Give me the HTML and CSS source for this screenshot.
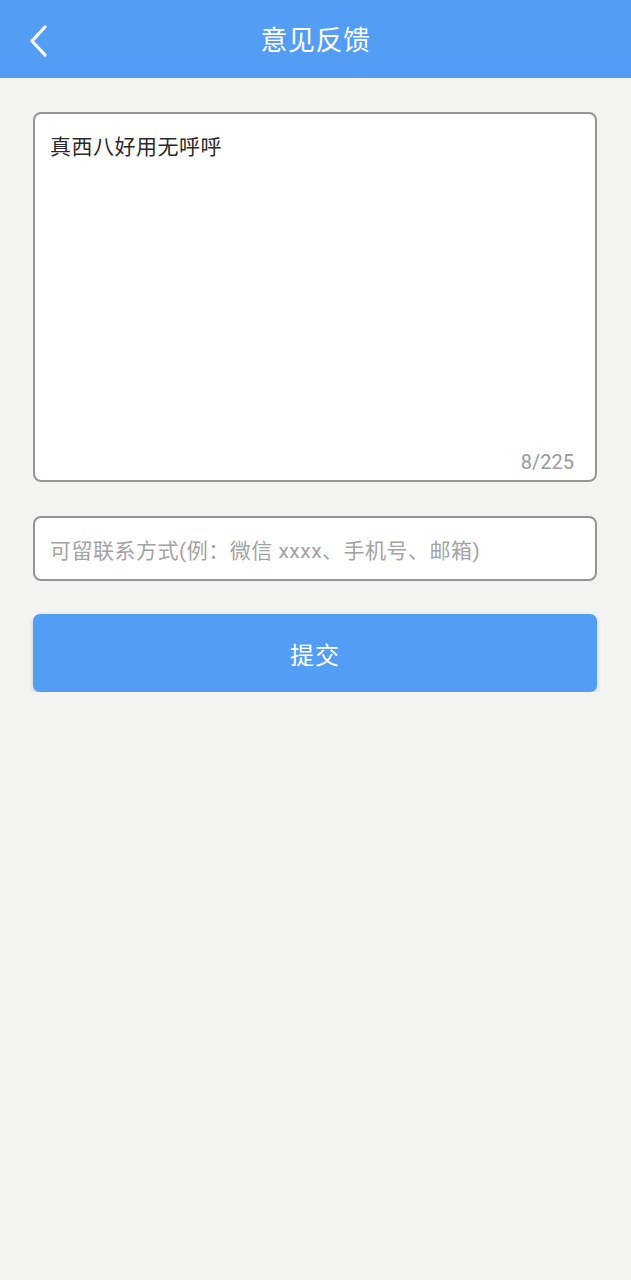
FILE: index.html
```
<!DOCTYPE html>
<html lang="zh">
<head>
<meta charset="utf-8">
<title>意见反馈</title>
<link rel="stylesheet" href="styles.css">
</head>
<body>
<header class="topbar">
  <button class="back" aria-label="返回">
    <svg width="24" height="34" viewBox="0 0 24 34"><path d="M18 3 L5 17 L18 31" fill="none" stroke="#fff" stroke-width="3.2" stroke-linecap="round" stroke-linejoin="round"/></svg>
  </button>
  <h1 class="title">意见反馈</h1>
</header>
<main class="content">
  <div class="feedback-box">
    <div class="feedback-text">真西八好用无呼呼</div>
    <div class="counter">8/225</div>
  </div>
  <div class="contact-box">
    <span class="placeholder">可留联系方式(例：微信 xxxx、手机号、邮箱)</span>
  </div>
  <button class="submit">提交</button>
</main>
</body>
</html>
```
FILE: styles.css
```
* { box-sizing: border-box; }
html, body {
  margin: 0;
  padding: 0;
  background: #f3f4f2;
  font-family: Roboto, "Noto Sans CJK SC", sans-serif;
}
.topbar {
  height: 78px;
  background: #539df5;
  display: flex;
  align-items: center;
  justify-content: center;
  position: relative;
}
.back {
  position: absolute;
  left: 27px;
  top: 24px;
  padding: 0;
  border: 0;
  background: none;
  display: flex;
}
.title {
  margin: 0;
  color: #fff;
  font-size: 27px;
  font-weight: 400;
  line-height: 1;
  padding-top: 4px;
  letter-spacing: 0.5px;
}
.content {
  padding: 34px 34px 0 33px;
  display: flex;
  flex-direction: column;
}
.feedback-box {
  height: 370px;
  background: #fff;
  border: 2px solid #959595;
  border-radius: 8px;
  display: flex;
  flex-direction: column;
  justify-content: space-between;
  padding: 20px 21px 5px 15px;
}
.feedback-text {
  font-size: 21px;
  line-height: 26px;
  color: #2a2a2a;
  letter-spacing: 0.5px;
}
.counter {
  align-self: flex-end;
  font-size: 20px;
  line-height: 26px;
  color: #9a9a9a;
}
.contact-box {
  margin-top: 34px;
  height: 65px;
  background: #fff;
  border: 2px solid #959595;
  border-radius: 8px;
  display: flex;
  align-items: center;
  padding: 0 15px;
}
.placeholder {
  font-size: 21px;
  color: #a3a3a3;
  padding-top: 1px;
  letter-spacing: 0.5px;
}
.submit {
  margin-top: 33px;
  height: 78px;
  border: 0;
  border-radius: 7px;
  background: #539df5;
  color: #fff;
  font-family: inherit;
  font-size: 24px;
  letter-spacing: 1px;
  box-shadow: 0 2px 4px rgba(0,0,0,0.2);
}
```
